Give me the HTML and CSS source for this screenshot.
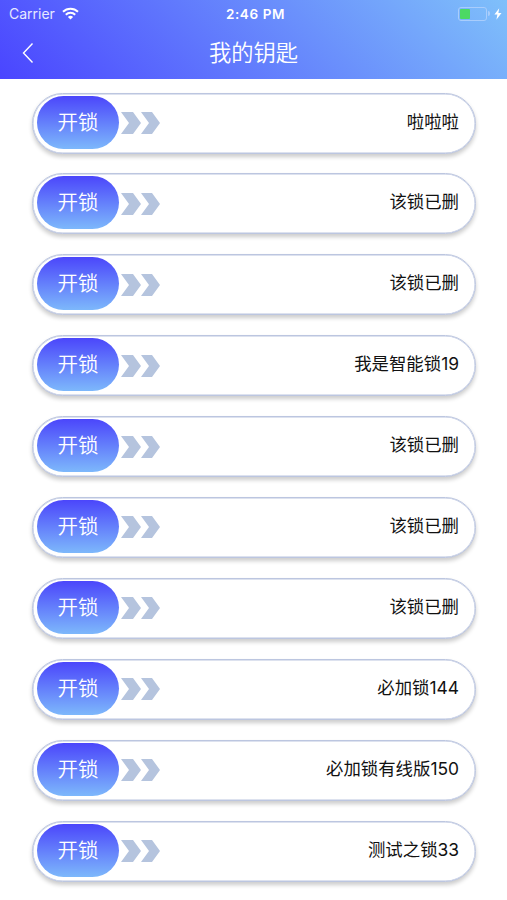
FILE: index.html
```
<!DOCTYPE html>
<html lang="zh-CN">
<head>
    <meta charset="UTF-8">
    <meta name="viewport" content="width=device-width, initial-scale=1.0">
    <title>我的钥匙</title>
    <link rel="stylesheet" href="styles.css">
</head>
<body>

    <header class="header">
        <div class="status-bar">
            <div class="carrier">
                <span>Carrier</span>
                <svg class="wifi" width="17" height="13" viewBox="0 0 17 13">
                    <g fill="none" stroke="#fff" stroke-width="2">
                        <path d="M1 4.8a10.6 10.6 0 0 1 15 0"/>
                        <path d="M3.8 7.8a6.6 6.6 0 0 1 9.4 0"/>
                    </g>
                    <path fill="#fff" d="M5.9 10a3.7 3.7 0 0 1 5.2 0L8.5 12.6z"/>
                </svg>
            </div>
            <span class="time">2:46 PM</span>
            <div class="power">
                <div class="battery"><div class="battery-level"></div></div>
                <div class="battery-tip"></div>
                <svg class="bolt" width="8" height="12" viewBox="0 0 8 12">
                    <path fill="#fff" d="M5.2 0.3L0.4 6.6h3L2.4 11.7 7.5 5h-3.1z"/>
                </svg>
            </div>
        </div>
        <nav class="nav-bar">
            <svg class="back" width="12" height="22" viewBox="0 0 12 22">
                <path fill="none" stroke="#fff" stroke-width="1.4" d="M10.5 1.5L1.5 11l9 9.5"/>
            </svg>
            <h1>我的钥匙</h1>
        </nav>
    </header>

    <!-- the arrow pair is shared by every row -->
    <svg class="symbols" width="0" height="0">
        <symbol id="arrows" viewBox="0 0 40 22">
            <path d="M0 0h12l8 11-8 11H0l8-11zM20 0h11l8 11-8 11H20l8-11z"/>
        </symbol>
    </svg>

    <main class="key-list">
        <div class="key">
            <button class="unlock" type="button">开锁</button>
            <svg class="arrows"><use href="#arrows"/></svg>
            <span class="key-name">啦啦啦</span>
        </div>
        <div class="key">
            <button class="unlock" type="button">开锁</button>
            <svg class="arrows"><use href="#arrows"/></svg>
            <span class="key-name">该锁已删</span>
        </div>
        <div class="key">
            <button class="unlock" type="button">开锁</button>
            <svg class="arrows"><use href="#arrows"/></svg>
            <span class="key-name">该锁已删</span>
        </div>
        <div class="key">
            <button class="unlock" type="button">开锁</button>
            <svg class="arrows"><use href="#arrows"/></svg>
            <span class="key-name">我是智能锁19</span>
        </div>
        <div class="key">
            <button class="unlock" type="button">开锁</button>
            <svg class="arrows"><use href="#arrows"/></svg>
            <span class="key-name">该锁已删</span>
        </div>
        <div class="key">
            <button class="unlock" type="button">开锁</button>
            <svg class="arrows"><use href="#arrows"/></svg>
            <span class="key-name">该锁已删</span>
        </div>
        <div class="key">
            <button class="unlock" type="button">开锁</button>
            <svg class="arrows"><use href="#arrows"/></svg>
            <span class="key-name">该锁已删</span>
        </div>
        <div class="key">
            <button class="unlock" type="button">开锁</button>
            <svg class="arrows"><use href="#arrows"/></svg>
            <span class="key-name">必加锁144</span>
        </div>
        <div class="key">
            <button class="unlock" type="button">开锁</button>
            <svg class="arrows"><use href="#arrows"/></svg>
            <span class="key-name">必加锁有线版150</span>
        </div>
        <div class="key">
            <button class="unlock" type="button">开锁</button>
            <svg class="arrows"><use href="#arrows"/></svg>
            <span class="key-name">测试之锁33</span>
        </div>
    </main>

</body>
</html>
```

FILE: styles.css
```
* {
    box-sizing: border-box;
}

body {
    margin: 0;
    height: 900px;
    overflow: hidden;
    background-color: #fff;
    font-family: Inter, "Noto Sans CJK SC", sans-serif;
}

.header {
    height: 79px;
    background: linear-gradient(45deg, #4a45ff, #7fc0fa);
    color: #fff;
}

.status-bar {
    display: grid;
    grid-template-columns: 1fr auto 1fr;
    align-items: center;
    height: 27px;
    padding: 0 5px 0 9px;
    font-size: 14px;
}

.carrier {
    display: flex;
    align-items: center;
    gap: 7px;
    color: #e6e8ff;
}

.time {
    font-size: 13.5px;
    font-weight: 600;
    letter-spacing: 0.6px;
}

.power {
    display: flex;
    align-items: center;
    justify-content: flex-end;
}

.battery {
    width: 29px;
    height: 14px;
    padding: 1px;
    border: 1px solid #a9cdfc;
    border-radius: 3px;
}

.battery-level {
    width: 10px;
    height: 10px;
    background-color: #4cd964;
    border-radius: 1px;
}

.battery-tip {
    width: 2px;
    height: 5px;
    margin: 0 4px 0 1px;
    background-color: #a9cdfc;
    border-radius: 0 2px 2px 0;
}

.nav-bar {
    display: grid;
    grid-template-columns: 1fr auto 1fr;
    align-items: center;
    height: 52px;
    padding: 0 22px;
}

h1 {
    margin: 0;
    font-size: 22.3px;
    font-weight: 350;
    line-height: 50px;
}

.symbols {
    display: block;
}

.key-list {
    display: flex;
    flex-direction: column;
    gap: 19.9px;
    padding: 13.5px 31px 0 32px;
}

.key {
    display: flex;
    align-items: center;
    height: 61px;
    padding: 0 16px 0 4px;
    border: 1px solid #bcc6e0;
    border-radius: 31px;
    background-color: #fff;
    box-shadow: inset 0 0 0 0.5px #bcc6e0, 0 3px 4px rgba(0, 0, 0, 0.2);
}

.unlock {
    width: 82px;
    height: 53px;
    margin-bottom: 2px;
    padding: 0 0 3px;
    border: none;
    border-radius: 27px;
    background: linear-gradient(#4b46fb, #7db8fb);
    color: #fff;
    font-family: inherit;
    font-size: 20.5px;
    font-weight: 350;
    cursor: pointer;
}

.arrows {
    width: 40px;
    height: 22px;
    margin-left: 2px;
    fill: #b5c4de;
}

.key-name {
    margin-left: auto;
    padding-bottom: 6px;
    font-size: 17.4px;
    color: #111;
}
```
